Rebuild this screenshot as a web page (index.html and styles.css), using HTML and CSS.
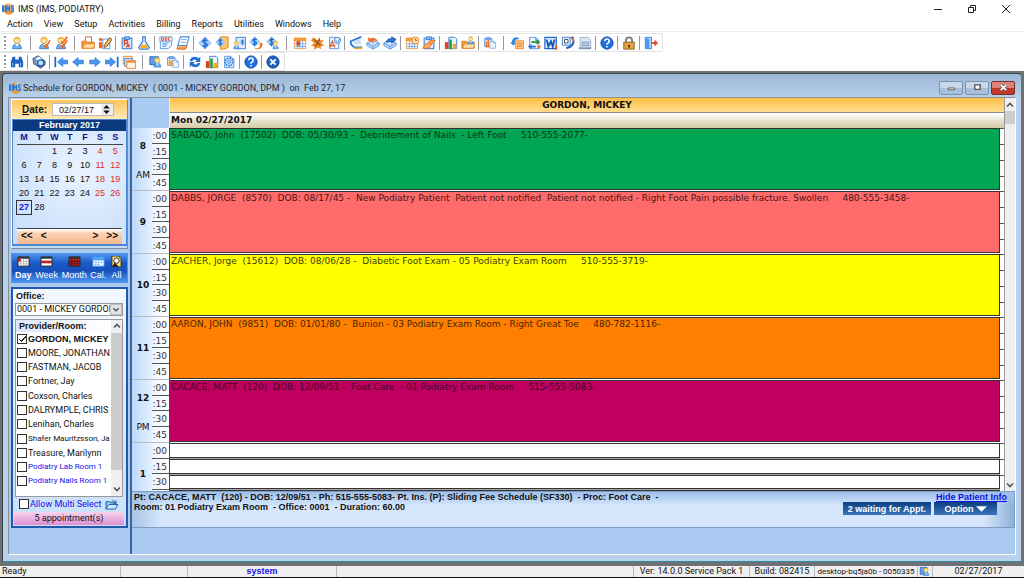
FILE: index.html
```
<!DOCTYPE html>
<html lang="en">
<head>
<meta charset="utf-8">
<title>IMS (IMS, PODIATRY)</title>
<link rel="stylesheet" href="styles.css">
</head>
<body>
<svg class="sprite" aria-hidden="true">
<symbol id="ims" viewBox="0 0 16 16"><circle cx="9" cy="8" r="7.500" fill="#f7941d"/><circle cx="11" cy="4" r="3" fill="#ffc978"/><path d="M0 3h3v9H0zM4 3h3l1 4 1-4h2v9H9V8l-1 3-1-3v4H4zM12 3h4v2h-2v2h2v5h-4v-2h2V8h-2z" fill="#1f6fd0" stroke="#d7e9ff" stroke-width=".3"/></symbol>
<symbol id="user" viewBox="0 0 16 16"><path d="M3 14.500q0-5.500 5-5.500t5 5.500z" fill="#6db0f2" stroke="#2b78d2"/><path d="M6 9l2 3 2-3" fill="#fff"/><circle cx="8" cy="5" r="3.600" fill="#ffe6b4" stroke="#c79a30"/><path d="M4 5q0-4 4-4t4 4q-4-3-8 0z" fill="#edbf3c"/></symbol>
<symbol id="check" viewBox="0 0 16 16"><path d="M7 10l3 3 5-8" fill="none" stroke="#f26a1b" stroke-width="2"/></symbol>
<symbol id="page" viewBox="0 0 16 16"><path d="M3 1.500h7l3.500 3.500v9.500H3z" fill="#eaf3ff" stroke="#4a90e2"/><path d="M10 1.500V5h3.500" fill="#9cc6f8" stroke="#4a90e2"/></symbol>
<symbol id="dollar" viewBox="0 0 16 16"><path d="M8 1l7 7-7 7-7-7z" fill="#a9d0fa" stroke="#7fb6f2"/><path d="M11 5.500Q8 3.500 6 5t2 3 2 3-5 0M8 2v12" fill="none" stroke="#1a66cc" stroke-width="1.500"/></symbol>
<symbol id="folder" viewBox="0 0 16 16"><path d="M1 14V6h5l1 1h8v7z" fill="#f79a2e" stroke="#e0761a"/><path d="M2 14l2-5h12l-2 5z" fill="#ffdca8" stroke="#e88a30"/></symbol>
<symbol id="clip" viewBox="0 0 16 16"><path d="M2.500 2.500h11v12h-11z" fill="#dbeaff" stroke="#4a90e2" stroke-width="1.400"/><path d="M5 1h6v3H5z" fill="#8fbdf4" stroke="#2f78d8"/></symbol>
<symbol id="bars" viewBox="0 0 16 16"><path d="M5.500 1.500h7l2 2v11h-9z" fill="#eaf3ff" stroke="#2f78d8"/><path d="M1 7h4v8H1z" fill="#d7402a"/><path d="M6 4h3v11H6z" fill="#2da22c"/><path d="M10 9h4v6h-4z" fill="#f5a52a"/></symbol>
<symbol id="cal" viewBox="0 0 16 16"><path d="M1.500 2.500h13v12h-13z" fill="#fff" stroke="#e8913d"/><path d="M1 2h14v4H1z" fill="#f39a3a"/><path d="M2 9h12M2 12h12M5 6v8M8 6v8M11 6v8" stroke="#6fa8ea"/></symbol>
<symbol id="left" viewBox="0 0 16 16"><path d="M2 8l6-5v3h6v4H8v3z" fill="#4a98ee" stroke="#2f7fdc"/></symbol>
<symbol id="right" viewBox="0 0 16 16"><path d="M14 8L8 3v3H2v4h6v3z" fill="#4a98ee" stroke="#2f7fdc"/></symbol>
<symbol id="help" viewBox="0 0 16 16"><circle cx="8" cy="8" r="7" fill="#1f6fdc" stroke="#0c479f"/><path d="M5.500 6q0-2.500 2.500-2.500T10.500 6Q10.500 7.500 8 9v1M8 11.500v1.700" fill="none" stroke="#fff" stroke-width="1.800"/></symbol>
<symbol id="box" viewBox="0 0 16 16"><path d="M1 8l7-3 7 3v3l-7 4-7-4z" fill="#c8e0fb" stroke="#4a90e2"/><path d="M1 8l7 4 7-4M8 12v3" fill="none" stroke="#4a90e2"/></symbol>
<symbol id="up" viewBox="0 0 10 10"><path d="M2 6.500l3-3 3 3" fill="none" stroke="#555" stroke-width="1.600"/></symbol>
<symbol id="down" viewBox="0 0 10 10"><path d="M2 3.500l3 3 3-3" fill="none" stroke="#555" stroke-width="1.600"/></symbol>
</svg>

<div class="app">
<header class="titlebar">
  <svg class="logo"><use href="#ims"/></svg><h1>IMS (IMS, PODIATRY)</h1>
  <div class="winctl">
    <button aria-label="Minimize"><svg viewBox="0 0 10 10"><path d="M1 5.500h8" stroke="#222"/></svg></button>
    <button aria-label="Restore"><svg viewBox="0 0 10 10"><path d="M1.500 3.500h5v5h-5zM3.500 3V1.500h5v5H7" fill="none" stroke="#222"/></svg></button>
    <button aria-label="Close"><svg viewBox="0 0 10 10"><path d="M1 1l8 8M9 1L1 9" stroke="#222"/></svg></button>
  </div>
</header>
<nav class="menu"><button>Action</button><button>View</button><button>Setup</button><button>Activities</button><button>Billing</button><button>Reports</button><button>Utilities</button><button>Windows</button><button>Help</button></nav>

<div class="toolbars">
<div class="toolbar"><i class="grip"></i>
<button aria-label="Patient"><svg viewBox="0 0 16 16"><use href="#user"/></svg></button><i class="sep wide"></i>
<button aria-label="Check in"><svg viewBox="0 0 16 16"><use href="#user"/><use href="#check"/></svg></button>
<button aria-label="Check out"><svg viewBox="0 0 16 16"><use href="#user"/><use href="#check"/><path d="M8 6l2 2 5-7" fill="none" stroke="#f26a1b" stroke-width="2"/></svg></button><i class="sep wide"></i>
<button aria-label="Chart"><svg viewBox="0 0 16 16"><path d="M5 1h7v9H5z" fill="#fff" stroke="#d84820"/><use href="#folder"/></svg></button>
<button aria-label="Notes"><svg viewBox="0 0 16 16"><path d="M5.500 3.500h8v11h-8z" fill="#fff" stroke="#4a90e2"/><circle cx="3" cy="4" r="2" fill="#f26a1b"/><path d="M1 7h4v7H1z" fill="#f26a1b"/><path d="M7 11l6-9 3 2-6 8-3 1z" fill="#ffbd59" stroke="#6e4a20"/></svg></button><i class="sep"></i>
<button aria-label="Prescription"><svg viewBox="0 0 16 16"><use href="#clip"/><path d="M5 11V5h3q2 2 0 3H5m2 0l4 5m0-4l-4 4" fill="none" stroke="#d83a20" stroke-width="1.300"/></svg></button>
<button aria-label="Lab"><svg viewBox="0 0 16 16"><path d="M6 1h4M6.500 1v5L2 13q0 2 2 2h8q2 0 2-2L9.500 6V1" fill="#e4f1ff" stroke="#2f78d8" stroke-width="1.300"/><path d="M5 10h6l2 4H3z" fill="#f9ae24"/></svg></button><i class="sep"></i>
<button aria-label="Document"><svg viewBox="0 0 16 16"><path d="M1.500 1.500h13v9l-4 4h-9z" fill="#eaf3ff" stroke="#4a90e2"/><path d="M1 1h14v5H1z" fill="#fff" stroke="#6aa4ea"/><path d="M3 2v3M3 2h2v3H3M7 2h2v3H7zM13 2h-2v3h2" fill="none" stroke="#e0401c"/><path d="M4 8h7M4 10h5M4 12h4" stroke="#4a90e2"/></svg></button>
<button aria-label="Forms"><svg viewBox="0 0 16 16"><path d="M5 1h10l-3 10H2z" fill="#fff" stroke="#4a90e2" stroke-width="1.300"/><path d="M2 12l-1 3h10l2-4" fill="#f6a555" stroke="#d8690f"/><path d="M6 4h6M5 7h6" stroke="#5a9fe8"/></svg></button><i class="sep"></i>
<button aria-label="Charges"><svg viewBox="0 0 16 16"><use href="#dollar"/></svg></button>
<button aria-label="Superbill"><svg viewBox="0 0 16 16"><path d="M6 1h9v12l-4 2H6z" fill="#ffc36a" stroke="#e07b18"/><use href="#dollar" width="12" height="14"/></svg></button>
<button aria-label="Payments"><svg viewBox="0 0 16 16"><path d="M4.500 1.500h11v13h-11z" fill="#dbeaff" stroke="#2f78d8"/><use href="#user" y="5" width="10" height="11"/><use href="#dollar" x="8" y="3" width="8" height="8"/></svg></button>
<button aria-label="Post"><svg viewBox="0 0 16 16"><use href="#dollar" width="13" height="13"/><path d="M7 14q5 1 6-4h-2l3-3 2 3-1 0q0 6-8 5z" fill="#f26a1b"/></svg></button>
<button aria-label="Accounts"><svg viewBox="0 0 16 16"><use href="#dollar" width="13" height="13"/><use href="#user" x="6" y="5" width="10" height="11"/></svg></button><i class="sep wide"></i>
<button aria-label="Schedule"><svg viewBox="0 0 16 16"><use href="#cal"/><path d="M4 6h4v5H4z" fill="#e5401e"/></svg></button>
<button aria-label="Tasks"><svg viewBox="0 0 16 16"><path d="M4 1l4 4 3-4 1 4 4-1-3 4 3 3-4 1 1 3-4-2-4 3v-4L1 11l4-3-4-3z" fill="#f48a26"/><path d="M5 4l7 7M11 4l-5 8" stroke="#8a4a20" stroke-width="1.300"/></svg></button>
<button aria-label="Authorization"><svg viewBox="0 0 16 16"><use href="#page"/><path d="M3 13l3-7 3 7M4 11h4" fill="none" stroke="#e6591e" stroke-width="1.400"/><circle cx="12" cy="5" r="3.500" fill="#eaf3ff" stroke="#2f78d8"/><path d="M10 5l2 2 3-4" fill="none" stroke="#2f78d8"/></svg></button><i class="sep"></i>
<button aria-label="Scan"><svg viewBox="0 0 16 16"><path d="M14 1L2 6v3l4 4h9" fill="none" stroke="#2377dd" stroke-width="2"/><path d="M13 3L4 7l3 3h7" fill="#c8e0fb"/><path d="M6 14h9" stroke="#f5a52a" stroke-width="2"/></svg></button>
<button aria-label="Inbox"><svg viewBox="0 0 16 16"><use href="#box"/><path d="M2 5l1-4 2 2q5-3 9 3-5-2-6 0l1 2z" fill="#ef6b2b"/></svg></button>
<button aria-label="Outbox"><svg viewBox="0 0 16 16"><use href="#box"/><path d="M4 7q0-4 6-4V1l5 3-5 4V6Q7 6 4 7z" fill="#2b7ad9" stroke="#104a96"/></svg></button><i class="sep"></i>
<button aria-label="Appointments"><svg viewBox="0 0 16 16"><use href="#cal"/><circle cx="12" cy="5" r="4" fill="#ffe1b5" stroke="#ee7c22"/><path d="M12 3v2h2" fill="none" stroke="#8a4a10"/></svg></button>
<button aria-label="Recalls"><svg viewBox="0 0 16 16"><use href="#clip"/><path d="M1 14l3-5h7l-3 5zM7 8l2-3h6l-2 3z" fill="#ffae60" stroke="#e46e1b"/></svg></button><i class="sep"></i>
<button aria-label="Graphs"><svg viewBox="0 0 16 16"><use href="#bars"/></svg></button>
<button aria-label="Patient folder"><svg viewBox="0 0 16 16"><use href="#folder"/><use href="#user" x="6" y="0" width="10" height="10"/></svg></button><i class="sep"></i>
<button aria-label="Report"><svg viewBox="0 0 16 16"><use href="#clip" width="12" height="14"/><path d="M4 6v7M6 4v9" stroke="#e46e1b" stroke-width="1.500"/><use href="#page" x="6" y="4" width="10" height="12"/></svg></button><i class="sep wide"></i>
<button aria-label="Copy"><svg viewBox="0 0 16 16"><path d="M10 2Q3 0 2 7l-2 0 4 4 3-4-2 0q1-4 5-3z" fill="#3187e6"/><path d="M6.500 5.500h9v9h-9z" fill="#ffd28f" stroke="#ee7c22"/><path d="M8 8h6M8 10h6M8 12h6" stroke="#ee7c22"/></svg></button>
<button aria-label="Transfer"><svg viewBox="0 0 16 16"><use href="#page"/><path d="M5 6h6V4l4 3-4 3V8H5z" fill="#26922c"/><path d="M10 11H5V9l-4 3 4 3v-2h5z" fill="#2370ce"/><path d="M11 11h5l-2 4z" fill="#f26a1b"/></svg></button>
<button aria-label="Word"><svg viewBox="0 0 16 16"><path d="M1 1.500h13v13H1z" fill="#dceaff" stroke="#2468c8" stroke-width="1.400"/><path d="M3 4l2 8 3-6 2 6 2-8" fill="none" stroke="#1452b8" stroke-width="2"/><path d="M14 10v6" stroke="#ef5a1a" stroke-width="2"/></svg></button>
<button aria-label="Fax"><svg viewBox="0 0 16 16"><path d="M1.500 1.500h9v9h-9z" fill="#eaf3ff" stroke="#2f78d8"/><path d="M4 4h4v4H4z" fill="#fff" stroke="#444"/><path d="M12 1q5 6-1 11l-5 2" fill="none" stroke="#2965b8" stroke-width="2.500"/><path d="M13 1h2v6h-2z" fill="#f26a1b"/></svg></button>
<button aria-label="Statement"><svg viewBox="0 0 16 16"><path d="M2.500 1.500h9l3 3v10h-12z" fill="#dbe6f4" stroke="#9ab0ca"/><path d="M4 9h4M9 9h4M4 7h9M4 11h9" stroke="#6f8ba8"/><path d="M1 13h14v2H1z" fill="#7e93aa"/></svg></button><i class="sep"></i>
<button aria-label="Help"><svg viewBox="0 0 16 16"><use href="#help"/></svg></button><i class="sep"></i>
<button aria-label="Lock"><svg viewBox="0 0 16 16"><path d="M4.500 8V5q0-3.500 3.500-3.500T11.500 5v3" fill="none" stroke="#777" stroke-width="2"/><path d="M2 7h12v8H2z" fill="#dfa144" stroke="#8a5d1a"/><path d="M8 10v3" stroke="#553300" stroke-width="2"/></svg></button><i class="sep"></i>
<button aria-label="Exit"><svg viewBox="0 0 16 16"><path d="M1.500 1.500h7v13h-7z" fill="#b9d8fb" stroke="#2f78d8"/><path d="M2 2l4 2v11l-4-2z" fill="#4a98ee"/><path d="M9 8h4" stroke="#d83a20" stroke-width="2"/><path d="M12 4l4 4-4 4z" fill="#e5401e"/></svg></button>
</div>
<div class="toolbar"><i class="grip"></i>
<button aria-label="Find"><svg viewBox="0 0 16 16"><path d="M1 14V8l2-6h3v3h4V2h3l2 6v6h-5v-4H6v4z" fill="#1f66c4"/><path d="M3 9v4M12 9v4" stroke="#8ec0f7"/></svg></button><i class="sep"></i>
<button aria-label="Print"><svg viewBox="0 0 16 16"><path d="M1 4l6-3 8 6v4l-5 4-8-5z" fill="#7d9cc0" stroke="#264a78"/><path d="M4 4l4-2 4 3-4 2z" fill="#fff"/><circle cx="10" cy="9" r="3.500" fill="#b9dcff" stroke="#1c5bb0" stroke-width="1.300"/></svg></button><i class="sep"></i>
<button aria-label="First"><svg viewBox="0 0 16 16"><path d="M1.500 2v12" stroke="#1e68c8" stroke-width="2"/><use href="#left" x="2"/></svg></button>
<button aria-label="Previous"><svg viewBox="0 0 16 16"><use href="#left"/></svg></button>
<button aria-label="Next"><svg viewBox="0 0 16 16"><use href="#right"/></svg></button>
<button aria-label="Last"><svg viewBox="0 0 16 16"><use href="#right" x="-2"/><path d="M14.500 2v12" stroke="#1e68c8" stroke-width="2"/></svg></button>
<button aria-label="Windows"><svg viewBox="0 0 16 16"><path d="M1.500 1.500h10v9h-10z" fill="#ffd9b0" stroke="#e88535"/><path d="M3 4h9v9H3z" fill="#c8e0fb" stroke="#4a90e2"/><path d="M5.500 6.500h10v9h-10z" fill="#fff3e2" stroke="#ee7c22"/><path d="M5 6h11v3H5z" fill="#f69645"/></svg></button><i class="sep wide"></i>
<button aria-label="Users"><svg viewBox="0 0 16 16"><path d="M1 2h10v9H1z" fill="#5d9fe8" stroke="#1d5cb0"/><use href="#user" x="3" y="2" width="13" height="13"/></svg></button>
<button aria-label="Paste"><svg viewBox="0 0 16 16"><use href="#clip" width="12" height="14"/><path d="M3 6h5v7H3z" fill="#f3a44f"/><use href="#page" x="6" y="4" width="10" height="12"/></svg></button><i class="sep"></i>
<button aria-label="Refresh"><svg viewBox="0 0 16 16"><path d="M2 7q1-5 6-5 3 0 4 2l2-2v6H8l2-2Q6 4 5 7zM14 9q-1 5-6 5-3 0-4-2l-2 2V8h6l-2 2q4 2 5-1z" fill="#1f6fd0"/></svg></button>
<button aria-label="Chart view"><svg viewBox="0 0 16 16"><use href="#bars"/></svg></button>
<button aria-label="Settings"><svg viewBox="0 0 16 16"><use href="#page"/><circle cx="8" cy="8" r="4.500" fill="#bcd9fb" stroke="#3c87e0" stroke-width="2" stroke-dasharray="2 1"/><circle cx="8" cy="8" r="1.500" fill="#fff" stroke="#3c87e0"/></svg></button><i class="sep"></i>
<button aria-label="About"><svg viewBox="0 0 16 16"><use href="#help"/></svg></button><i class="sep"></i>
<button aria-label="Close window"><svg viewBox="0 0 16 16"><circle cx="8" cy="8" r="7" fill="#1c62c0" stroke="#0b3d88"/><path d="M5 5l6 6M11 5l-6 6" stroke="#fff" stroke-width="2.200"/></svg></button>
</div>
</div>

<main class="mdi">
<section class="child">
<div class="childbar"><svg class="logo"><use href="#ims"/></svg><h2>Schedule for GORDON, MICKEY  ( 0001 - MICKEY GORDON, DPM )  on  Feb 27, 17</h2>
  <div class="childctl">
  <button aria-label="Minimize schedule"><svg viewBox="0 0 10 10"><path d="M1.500 5.500h7v2h-7z" fill="#fff" stroke="#555"/></svg></button>
  <button aria-label="Maximize schedule"><svg viewBox="0 0 10 10"><path d="M2 2h6v5H2z" fill="#fff" stroke="#555" stroke-width="1.500"/></svg></button>
  <button class="red" aria-label="Close schedule"><svg viewBox="0 0 10 10"><path d="M2 2l6 6M8 2L2 8" stroke="#555" stroke-width="3.500"/><path d="M2 2l6 6M8 2L2 8" stroke="#fff" stroke-width="2"/></svg></button></div>
</div>
<div class="content">
<aside class="side">
  <div class="calbox">
    <div class="datebar"><label for="d"><u>D</u>ate:</label><div class="datefield"><input id="d" value="02/27/17"><button aria-label="Change date"><svg viewBox="0 0 10 10"><path d="M2 4h6L5 1zM2 6h6L5 9z" fill="#111"/></svg></button></div></div>
    <div class="calendar">
      <h3>February 2017</h3>
      <table><thead><tr><th>M</th><th>T</th><th>W</th><th>T</th><th>F</th><th>S</th><th>S</th></tr></thead>
      <tbody>
      <tr><td></td><td></td><td>1</td><td>2</td><td>3</td><td>4</td><td>5</td></tr>
      <tr><td>6</td><td>7</td><td>8</td><td>9</td><td>10</td><td>11</td><td>12</td></tr>
      <tr><td>13</td><td>14</td><td>15</td><td>16</td><td>17</td><td>18</td><td>19</td></tr>
      <tr><td>20</td><td>21</td><td>22</td><td>23</td><td>24</td><td>25</td><td>26</td></tr>
      <tr><td class="today">27</td><td>28</td><td></td><td></td><td></td><td></td><td></td></tr>
      </tbody></table>
      <div class="calnav"><button>&lt;&lt;</button><button>&lt;</button><button class="fwd">&gt;</button><button>&gt;&gt;</button></div>
    </div>
  </div>
  <div class="views">
    <button class="on"><svg viewBox="0 0 14 12"><path d="M1 1h12v10H1z" fill="#fff" stroke="#222"/><path d="M1 1h12v2H1z" fill="#333"/><path d="M2 6h11M2 8.500h11M4 3v8M7 3v8M10 3v8" stroke="#bbb"/><path d="M1 3h3v3H1z" fill="#c01818"/></svg>Day</button>
    <button><svg viewBox="0 0 14 12"><path d="M1 1h12v10H1z" fill="#fff" stroke="#222"/><path d="M1 1h12v2H1z" fill="#333"/><path d="M1 5h12v3H1z" fill="#c02828"/></svg>Week</button>
    <button><svg viewBox="0 0 14 12"><path d="M1 1h12v10H1z" fill="#c02828" stroke="#222"/><path d="M1 1h12v2H1z" fill="#333"/><path d="M1 6h12M1 8.500h12M4 3v8M7 3v8M10 3v8" stroke="#5c1010"/></svg>Month</button>
    <button><svg viewBox="0 0 14 12"><path d="M1 2h12v9H1z" fill="#fff" stroke="#5db1ff"/><path d="M1 2h12v3H1zM3 0h2v3H3zM9 0h2v3H9z" fill="#4aa4ff"/><path d="M3 7h2M6 7h2M9 7h2M3 9h2M6 9h2" stroke="#3c8de8"/></svg>Cal.</button>
    <button><svg viewBox="0 0 14 12"><path d="M2 0h7l3 3v9H2z" fill="#ffe36a" stroke="#222"/><circle cx="7" cy="5" r="3" fill="#fff" stroke="#222"/><path d="M2 12l3-5 5 5z" fill="#222"/></svg>All</button>
  </div>
  <div class="office">
    <label class="lbl" for="off">Office:</label>
    <div class="pick"><select id="off"><option>0001 - MICKEY GORDON</option></select><svg viewBox="0 0 10 10"><use href="#down"/></svg></div>
    <div class="list">
      <div class="names">
        <h4>Provider/Room:</h4>
        <div class="rows">
        <label class="b"><input type="checkbox" checked>GORDON, MICKEY</label>
        <label><input type="checkbox">MOORE, JONATHAN</label>
        <label><input type="checkbox">FASTMAN, JACOB</label>
        <label><input type="checkbox">Fortner, Jay</label>
        <label><input type="checkbox">Coxson, Charles</label>
        <label><input type="checkbox">DALRYMPLE, CHRIS</label>
        <label><input type="checkbox">Lenihan, Charles</label>
        <label class="long"><input type="checkbox">Shafer Mauritzsson, Ja</label>
        <label><input type="checkbox">Treasure, Marilynn</label>
        <label class="blue long"><input type="checkbox">Podiatry Lab Room 1</label>
        <label class="blue long"><input type="checkbox">Podiatry Nails Room 1</label>
        </div>
      </div>
      <div class="scroll"><button aria-label="Scroll list up"><svg><use href="#up"/></svg></button><i class="thumb tall"></i><button aria-label="Scroll list down"><svg><use href="#down"/></svg></button></div>
    </div>
    <div class="multi"><label class="blue"><input type="checkbox">Allow Multi Select</label><svg viewBox="0 0 14 12"><path d="M1 11V3h4l1 1h5v2" fill="#8fd0f8" stroke="#1c5a9c"/><path d="M1 11l3-5h10l-3 5z" fill="#c5eaff" stroke="#1c5a9c"/><path d="M7 3q2-3 4 0l1-1v3H9" fill="none" stroke="#1c5a9c"/></svg></div>
    <div class="count">5 appointment(s)</div>
  </div>
</aside>
<section class="main">
  <div class="sched">
    <div class="head"><div class="corner"></div><div class="heads"><div class="prov">GORDON, MICKEY</div><div class="day">Mon 02/27/2017</div></div></div>
    <div class="body">
      <div class="hour"><div class="hr two"><b>8</b><span>AM</span></div><ol><li>:00</li><li>:15</li><li>:30</li><li>:45</li></ol><div class="slot"><div class="appt green">SABADO, John  (17502)  DOB: 05/30/93 -  Debridement of Nails  - Left Foot     510-555-2077-</div></div></div>
      <div class="hour"><div class="hr"><b>9</b></div><ol><li>:00</li><li>:15</li><li>:30</li><li>:45</li></ol><div class="slot"><div class="appt coral">DABBS, JORGE  (8570)  DOB: 08/17/45 -  New Podiatry Patient  Patient not notified  Patient not notified - Right Foot Pain possible fracture. Swollen     480-555-3458-</div></div></div>
      <div class="hour"><div class="hr"><b>10</b></div><ol><li>:00</li><li>:15</li><li>:30</li><li>:45</li></ol><div class="slot"><div class="appt yellow">ZACHER, Jorge  (15612)  DOB: 08/06/28 -  Diabetic Foot Exam - 05 Podiatry Exam Room     510-555-3719-</div></div></div>
      <div class="hour"><div class="hr"><b>11</b></div><ol><li>:00</li><li>:15</li><li>:30</li><li>:45</li></ol><div class="slot"><div class="appt orange">AARON, JOHN  (9851)  DOB: 01/01/80 -  Bunion - 03 Podiatry Exam Room - Right Great Toe     480-782-1116-</div></div></div>
      <div class="hour"><div class="hr two"><b>12</b><span>PM</span></div><ol><li>:00</li><li>:15</li><li>:30</li><li>:45</li></ol><div class="slot"><div class="appt plum">CACACE, MATT  (120)  DOB: 12/09/51 -  Foot Care  - 01 Podiatry Exam Room     515-555-5083-</div></div></div>
      <div class="hour"><div class="hr"><b>1</b></div><ol><li>:00</li><li>:15</li><li>:30</li><li></li></ol><div class="slot free"><i></i><i></i><i></i><i></i></div></div>
    </div>
    <div class="scroll vs"><button aria-label="Scroll up"><svg><use href="#up"/></svg></button><i class="thumb"></i><button class="end" aria-label="Scroll down"><svg><use href="#down"/></svg></button></div>
  </div>
  <div class="info">
    <p>Pt: CACACE, MATT  (120) - DOB: 12/09/51 - Ph: 515-555-5083- Pt. Ins. (P): Sliding Fee Schedule (SF330)  - Proc: Foot Care  -
Room: 01 Podiatry Exam Room  - Office: 0001  - Duration: 60.00</p>
    <div class="acts"><a href="#">Hide Patient Info</a><div><button>2 waiting for Appt.</button><button class="opt">Option<svg viewBox="0 0 12 8"><path d="M0 1h12L6 7z" fill="#fff"/></svg></button></div></div>
  </div>
</section>
</div>
</section>
</main>

<footer class="status"><span class="s1">Ready</span><span class="s2"></span><span class="s3">system</span><span class="s4"></span><span class="s5">Ver: 14.0.0 Service Pack 1</span><span class="s6">Build: 082415</span><span class="s7">desktop-bq5ja0b - 0050335</span><span class="s8"><svg viewBox="0 0 16 16"><path d="M1 2h10v10H1z" fill="#5d9fe8" stroke="#1d5cb0"/><use href="#user" x="3" y="2" width="13" height="13"/></svg></span><span class="s9">02/27/2017</span></footer>
</div>
</body>
</html>
```
FILE: styles.css
```
* { box-sizing: border-box; }
body { margin: 0; background: #fff; color: #111; font: 9px/12px "Liberation Sans", Arial, sans-serif; }
h1, h2, h3, h4, p, ol { margin: 0; padding: 0; font-size: inherit; font-weight: normal; list-style: none; }
button { border: 0; padding: 0; background: none; font: inherit; color: inherit; }
input, select { font: inherit; color: inherit; }
svg { display: block; flex: none; }
.sprite { display: none; }
.app { display: flex; flex-direction: column; min-height: 100vh; }

.titlebar { display: flex; align-items: center; height: 17px; padding-left: 2px; gap: 4px; font: 9px/12px Roboto, "Noto Sans", sans-serif; }
.logo { width: 12px; height: 12px; }
.winctl { display: flex; margin-left: auto; padding-right: 13px; gap: 24px; }
.winctl svg { width: 10px; height: 10px; }
.menu { display: flex; height: 15px; padding-left: 7px; gap: 11px; font: 9px/14px Roboto, "Noto Sans", sans-serif; border-bottom: 1px solid #ececec; }
.toolbars { display: flex; flex-direction: column; align-items: flex-start; padding-top: 1px; }
.toolbar { display: flex; align-items: center; height: 19px; padding-right: 3px; border: 1px solid #e2e2e2; border-left: 0; border-radius: 2px; }
.toolbar button { width: 17px; display: flex; justify-content: center; }
.toolbar svg { width: 14px; height: 14px; }
.grip { width: 2px; height: 13px; margin: 0 2px 0 4px; background: repeating-linear-gradient(#999 0 2px, #fff 2px 4px); }
.sep { width: 1px; height: 14px; margin: 0 2px; background: #999; }
.sep.wide { margin: 0 4px 0 5px; }

.mdi { flex: 1; display: flex; padding: 2px 2px 4px 2px; background: #6e7074; }
.child { flex: 1; display: flex; flex-direction: column; min-width: 0; padding: 0 5px 6px 5px; border: 1px solid #3c4650; border-right-color: #2b8fa0; border-bottom-color: #2b8fa0; border-radius: 4px 4px 0 0; background: linear-gradient(#9ab6d6, #b9d1ea 24px); }
.childbar { display: flex; align-items: center; height: 23px; gap: 2px; padding: 4px 1px 0 1px; font: 9px/14px Roboto, "Noto Sans", sans-serif; color: #1c2733; white-space: pre; }
.childctl { display: flex; gap: 2px; margin-left: auto; }
.childctl button { display: flex; align-items: center; justify-content: center; width: 24px; height: 14px; border: 1px solid #7d93ad; border-radius: 2px; background: linear-gradient(#c8d9ec 50%, #a5bfdc 50%); }
.childctl svg { width: 9px; height: 9px; }
.childctl .red { border-color: #7c2f26; background: linear-gradient(#dd8478 50%, #c0392b 50%); }
.content { flex: 1; display: flex; border: 1px solid #8b9097; border-right-color: #fff; border-bottom-color: #fff; background: #abcaf2; }

.side { flex: none; width: 123px; padding: 1px 2px 0 2px; border-right: 2px solid #3a63a0; }
.calbox { padding-bottom: 2px; border: 1px solid #808a98; border-left-color: #fff; border-top-color: #fff; background: #c5dcf8; }
.datebar { display: flex; align-items: center; gap: 5px; height: 19px; padding-left: 10px; background: linear-gradient(#ffc558, #ffe9b8); font-size: 10px; font-weight: bold; }
.datefield { display: flex; height: 13px; border: 1px solid #bbb; background: #fff; font-weight: normal; font-size: 9px; }
.datefield input { width: 48px; min-width: 0; border: 0; padding: 0 0 0 6px; background: none; }
.datefield button { width: 12px; background: #ececec; }
.datefield svg { width: 11px; height: 11px; }
.calendar { border: solid #4a86d0; border-width: 1px 1px 2px; background: radial-gradient(circle at 60% 40%, #eaf3ff, #c3dcfb); }
.calendar h3 { height: 11px; background: #0b3b7e; color: #fff; font-weight: bold; line-height: 11px; text-align: center; }
.calendar table { width: calc(100% - 6px); margin: 0 3px; border-collapse: collapse; table-layout: fixed; text-align: center; }
.calendar th { height: 13px; padding: 0; color: #12128c; border-bottom: 1px solid #444; line-height: 11px; }
.calendar td { height: 14px; padding: 0; line-height: 12px; }
.calendar td:nth-child(n+6) { color: #e02828; }
.calendar .today { border: 1px solid #333; color: #1010e8; font-weight: bold; }
.calnav { display: flex; gap: 8px; height: 16px; margin: 13px 4px 0; padding: 0 4px; border-top: 1px solid #444; background: linear-gradient(#fff, #fbd0b0 30%, #f6b88e); font-weight: bold; font-size: 10px; }
.calnav .fwd { margin-left: auto; }

.views { display: flex; justify-content: space-between; height: 30px; margin-top: 4px; padding: 2px 4px 0 3px; border: 1px solid #4f90e8; background: linear-gradient(#4e94ee, #1d5cc8 30%, #1650bb 60%, #4c93ee); color: #fff; }
.views button { display: flex; flex-direction: column; align-items: center; gap: 2px; line-height: 12px; }
.views .on { font-weight: bold; }
.views svg { width: 13px; height: 11px; }

.office { margin-top: 4px; padding: 1px 3px 1px 2px; border: 2px solid #2358a8; background: linear-gradient(#f2f7ff, #c9dffa); }
.lbl { display: block; height: 13px; padding-left: 1px; font-weight: bold; }
.pick, .rows, .multi, .count, .status { font-family: Roboto, "Liberation Sans", sans-serif; }
.pick { display: flex; position: relative; height: 13px; margin-bottom: 3px; border: 1px solid #999; background: #fff; }
.pick select { width: 100%; padding: 0 11px 0 1px; border: 0; background: none; appearance: none; line-height: 11px; }
.pick svg { position: absolute; right: 0; top: 0; width: 12px; height: 11px; background: #e4e4e4; border: 1px solid #bbb; }
.list { display: flex; height: 178px; border: 1px solid #999; background: #fff; }
.names { flex: 1; min-width: 0; overflow: hidden; }
.names h4 { height: 12px; padding-left: 3px; background: linear-gradient(90deg, #dce9fa, #fff); font-weight: bold; }
.rows { display: grid; grid-auto-rows: 1fr; height: 157px; }
.rows label, .multi label { display: flex; align-items: center; gap: 1px; padding-left: 1px; white-space: pre; }
.rows .b { font-family: "Liberation Sans", sans-serif; font-weight: bold; }
.rows .long { font-size: 8px; }
.blue { color: #1212e8; }
input[type=checkbox] { flex: none; appearance: none; width: 10px; height: 10px; margin: 0; border: 1px solid #333; background: #fff; }
input[type=checkbox]:checked { background: linear-gradient(135deg, transparent 42%, #333 42% 58%, transparent 58%) 3px 1px / 5px 6px no-repeat, linear-gradient(45deg, transparent 38%, #333 38% 62%, transparent 62%) 1px 4px / 3px 3px no-repeat, #fff; }
.scroll { flex: none; display: flex; flex-direction: column; width: 11px; background: #efefef; }
.scroll button { height: 13px; display: flex; align-items: center; justify-content: center; }
.scroll svg { width: 10px; height: 10px; }
.thumb { height: 13px; background: #cdcdcd; }
.thumb.tall { flex: 1; margin-bottom: 13px; }
.multi { display: flex; align-items: center; gap: 4px; height: 15px; padding-left: 3px; }
.multi svg { width: 13px; height: 11px; }
.count { height: 13px; margin: 0 -1px; background: linear-gradient(#f6d3ef, #dd8fd0); line-height: 13px; text-align: center; }

.main { flex: 1; min-width: 0; }
.sched { display: grid; grid-template-columns: 1fr 11px; grid-template-rows: 30px 363px; }
.head { display: flex; font: bold 9px/14px "DejaVu Sans", Verdana, sans-serif; }
.corner { width: 38px; background: #a8caf3; border-right: 1px solid #eee; }
.heads { flex: 1; }
.prov { height: 15px; border-bottom: 1px solid #888; background: linear-gradient(#ffbe45, #ffdd90); text-align: center; }
.day { height: 15px; padding-left: 1px; background: linear-gradient(#fff, #d3c9a5); }
.body { grid-row: 2; overflow: hidden; background: #fff; font: 9px/12px "DejaVu Sans", Verdana, sans-serif; }
.hour { display: flex; height: 63px; }
.hr { display: flex; flex-direction: column; align-items: center; justify-content: center; width: 20px; padding-left: 2px; background: linear-gradient(90deg, #bcd8fb, #e4f0fe); border-bottom: 1px solid #bbb; }
.hr.two { gap: 17px; padding-top: 2px; }
.hour ol { display: grid; grid-template-rows: repeat(4, 1fr); width: 17px; background: linear-gradient(90deg, #edf5ff, #fff); border-bottom: 1px solid #bbb; }
.hour li { display: flex; align-items: center; justify-content: flex-end; padding: 2px 2px 0 0; border-bottom: 1px solid #555; color: #333; white-space: nowrap; }
.hour li:last-child { border: 0; }
.slot { flex: 1; min-width: 0; padding: 0 4px 1px 0; border-left: 1px solid #444; background: linear-gradient(#555 0 1px, transparent 1px) 0 0 / 100% 16px, #fff; }
.appt { height: 100%; border: solid #333; border-width: 1px 1px 1px 0; padding-left: 1px; line-height: 12px; white-space: pre; overflow: hidden; }
.green { background: #00a651; color: #06361c; }
.coral { background: #ff6b6b; color: #4b1414; }
.yellow { background: #ffff00; color: #3c3c00; }
.orange { background: #ff8000; color: #4a2500; }
.plum { background: #bf0060; color: #3f0020; }
.free { display: grid; grid-template-rows: repeat(4, 1fr); padding: 0 4px 0 0; }
.free i { margin-bottom: 1px; border: solid #333; border-width: 1px 1px 1px 0; background: #fff; box-shadow: 0 1px #aaa; }
.vs { grid-column: 2; grid-row: 1 / 3; border-left: 1px solid #999; }
.vs .end { margin-top: auto; }

.info { display: flex; justify-content: space-between; height: 37px; padding: 0 7px 0 2px; border: 1px solid #7f9cc2; border-left: 0; background: linear-gradient(#9fc0ea, transparent 14px), linear-gradient(90deg, #a9c4e4, #d6e7fd 30px calc(100% - 30px), #8fb0d8); font-weight: bold; }
.info p { white-space: pre; line-height: 10px; font-weight: bold; }
.acts { display: flex; flex-direction: column; align-items: flex-end; }
.acts a { color: #1010e8; line-height: 10px; }
.acts div { display: flex; gap: 3px; padding-right: 10px; }
.acts button { display: flex; align-items: center; justify-content: center; gap: 2px; height: 13px; padding: 0 5px; background: linear-gradient(#0d3f82, #3a74bd); color: #fff; font-weight: bold; }
.acts .opt { width: 63px; }
.acts svg { width: 11px; height: 8px; }

.status { display: flex; height: 12px; border-bottom: 1px solid #111; background: #f0f0f0; line-height: 11px; white-space: nowrap; }
.status span { border-right: 1px solid #bbb; text-align: center; }
.status .s1 { width: 121px; padding-left: 2px; text-align: left; }
.s2 { width: 67px; }
.status .s3 { width: 149px; color: #1212e8; font: bold 9px/11px "Liberation Sans", sans-serif; }
.s4 { flex: 1; }
.s5 { width: 116px; }
.s6 { width: 65px; }
.s7 { width: 103px; font-size: 8px; }
.s8 { width: 15px; padding-left: 1px; }
.s8 svg { width: 12px; height: 11px; }
.status .s9 { width: 91px; border: 0; }
```
